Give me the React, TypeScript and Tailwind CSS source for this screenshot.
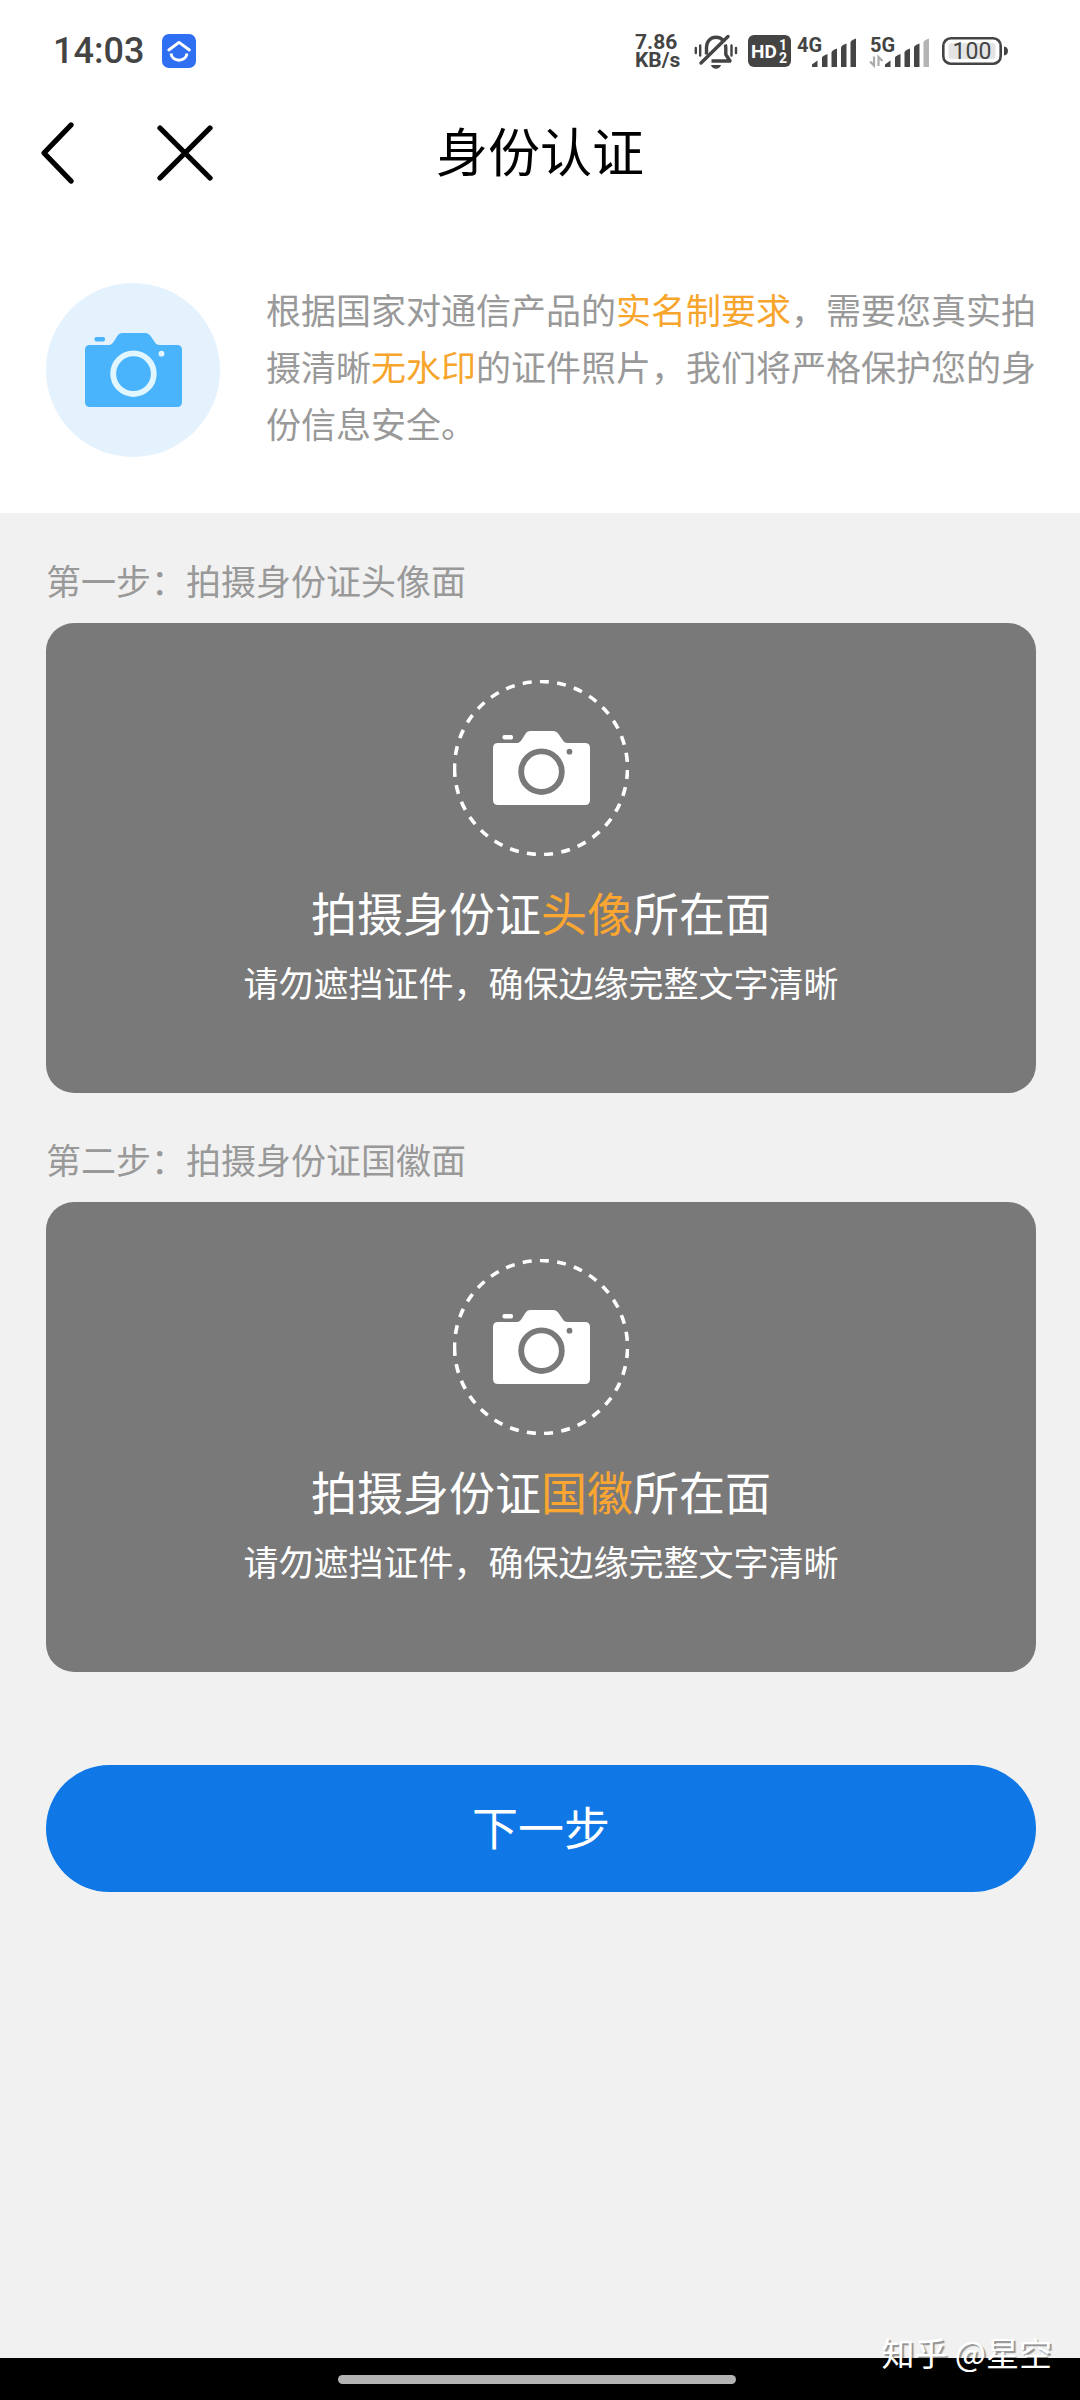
import type { ReactNode } from 'react';

function AppBadge() {
  return (
    <svg width="34" height="34" viewBox="0 0 34 34" fill="none" aria-hidden="true">
      <rect width="34" height="34" rx="7" fill="#2f6ff1" />
      <g stroke="#fff" strokeWidth="2.9">
        <path d="M6.8 16 17 8.4 27.4 16" strokeLinecap="round" strokeLinejoin="round" />
        <path d="M9 19.5C9.6 23.600 12.800 26.200 17 26.200S24.400 23.600 25 19.500" />
      </g>
    </svg>
  );
}

function MutedBell() {
  return (
    <svg width="50" height="40" viewBox="0 0 50 40" fill="none" stroke="#444" aria-hidden="true">
      <g strokeWidth="3.4" strokeLinejoin="round">
        <path d="M14.500 23.500V16.500C14.500 10.500 18.500 6.200 24 6.200c3 0 5.200 1 6.800 2.800" />
        <path d="M33.300 13.500c.4 1.200.5 2.300.5 3.500v6.500l4.200 6.500H19.500" />
        <path d="M9 32 36 5.500" strokeLinecap="round" />
      </g>
      <path d="M19 34h10c-.8 2.500-2.600 3.800-5 3.800s-4.200-1.300-5-3.800z" fill="#444" stroke="none" />
      <path d="M8.200 14.500v10M3.800 17v5M39.500 14.500v10M44 17v5" strokeWidth="2.4" strokeLinecap="round" />
    </svg>
  );
}

function HdBadge() {
  return (
    <svg width="43" height="32" viewBox="0 0 43 32" aria-hidden="true">
      <rect width="43" height="32" rx="6" fill="#444" />
      <g fill="#fff" fontFamily="Roboto, sans-serif" fontWeight="700">
        <text x="3" y="23" fontSize="19">HD</text>
        <text x="31" y="15" fontSize="14">1</text>
        <text x="31" y="28" fontSize="14">2</text>
      </g>
    </svg>
  );
}

function Signal({ label, full }: { label: string; full: boolean }) {
  return (
    <svg
      className="overflow-visible"
      width={full ? 60 : 73}
      height="34"
      viewBox={full ? '0 0 60 34' : '-7 0 73 34'}
      fill="#444"
      aria-hidden="true"
    >
      <text x="0" y="18" fontSize="20" fontWeight="700" fontFamily="Roboto, sans-serif">
        {label}
      </text>
      <path d="M15 33V30.500L20.500 26.500V33z" />
      <path d="M25 33V23.500Q25 22 30.500 20V33z" />
      <path d="M34.500 33V18.500Q34.500 16.500 40 14.500V33z" />
      <path d="M44 33V13.500Q44 11.500 49.500 9.500V33z" />
      <path d="M53.500 33V8.500Q53.500 6.500 59 4.500V33z" fill={full ? '#444' : '#b4b4b4'} />
      {!full && (
        <path d="M4 22.500v9l-4-4M8.500 32v-9l4 4" fill="none" stroke="#aaa" strokeWidth="2.2" />
      )}
    </svg>
  );
}

function Battery() {
  return (
    <svg width="66" height="28" viewBox="0 0 66 28" fill="none" aria-hidden="true">
      <rect x="1.300" y="1.300" width="57.400" height="25.400" rx="7.500" stroke="#444" strokeWidth="2.6" />
      <rect x="6.500" y="6" width="47" height="16" rx="3" fill="#e4e4e4" />
      <path d="M62 9.500c2.500.3 4 1.800 4 4.500s-1.500 4.200-4 4.500z" fill="#444" />
      <text x="30" y="22" textAnchor="middle" fontSize="23" fontFamily="Roboto, sans-serif" fill="#444">
        100
      </text>
    </svg>
  );
}

function Camera({ body, lens }: { body: string; lens: string }) {
  return (
    <svg width="97" height="74" viewBox="0 0 97 74" fill={body} aria-hidden="true">
      <rect x="9.500" y="4" width="10.500" height="4.600" rx="1.800" />
      <path d="M5 12H23.500C26.500 12 28 10 29.500 7.500L32 3.500C33.500 1 35 0 37.500 0H60C62.500 0 64 1 65.500 3L70 9.500C71.300 11.300 72.500 12 74.500 12H92Q97 12 97 17V69Q97 74 92 74H5Q0 74 0 69V17Q0 12 5 12z" />
      <circle cx="48.500" cy="40.700" r="20.300" fill="none" stroke={lens} strokeWidth="5.8" />
      <circle cx="76.500" cy="20.700" r="2.900" fill={lens} />
    </svg>
  );
}

function CaptureStep({ step, children }: { step: string; children: ReactNode }) {
  return (
    <section>
      <h2 className="text-[35px] leading-[50px] text-[#999]">{step}</h2>
      <button
        type="button"
        className="mt-[18px] flex w-full flex-col items-center rounded-[28px] bg-[#797979] pt-[57px] pb-[86px] text-white"
      >
        <span className="grid place-items-center">
          <svg className="col-start-1 row-start-1" width="176" height="176" viewBox="-88 -88 176 176" fill="none" aria-hidden="true">
            <circle r="86.500" stroke="#fff" strokeWidth="3.6" strokeDasharray="9 8.35" transform="scale(-1 1)" />
          </svg>
          <span className="col-start-1 row-start-1">
            <Camera body="#fff" lens="#797979" />
          </span>
        </span>
        <span className="mt-[22px] text-[46px] leading-[66px]">{children}</span>
        <span className="mt-[13px] text-[35px] leading-[50px]">请勿遮挡证件，确保边缘完整文字清晰</span>
      </button>
    </section>
  );
}

export default function App() {
  return (
    <div
      lang="zh-CN"
      className="flex min-h-screen flex-col bg-[#f1f1f1] font-['Noto_Sans_CJK_SC',sans-serif]"
    >
      <header className="bg-white">
        {/* Status bar */}
        <div className="flex h-[102px] items-center justify-between pr-[72px] pl-[53px] font-['Roboto',sans-serif] text-[#444]">
          <div className="flex items-center gap-[18px]">
            <span className="text-[36px] leading-10 font-medium">14:03</span>
            <AppBadge />
          </div>
          <div className="flex items-center gap-1.5">
            <span className="w-[51px] text-[21px] leading-[18px] font-bold">
              7.86
              <br />
              KB/s
            </span>
            <MutedBell />
            <HdBadge />
            <Signal label="4G" full />
            <Signal label="5G" full={false} />
            <Battery />
          </div>
        </div>

        {/* Title bar */}
        <div className="grid h-[102px] grid-cols-[1fr_auto_1fr] items-center">
          <div className="flex items-center gap-20 pl-10">
            <button type="button" aria-label="返回">
              <svg width="36" height="64" viewBox="0 0 36 64" fill="none" stroke="#000" strokeWidth="5.3" strokeLinecap="round" strokeLinejoin="round">
                <path d="M31 4 4 32 31 60" />
              </svg>
            </button>
            <button type="button" aria-label="关闭">
              <svg width="58" height="58" viewBox="0 0 58 58" fill="none" stroke="#000" strokeWidth="5.3" strokeLinecap="round">
                <path d="M4 4 54 54M54 4 4 54" />
              </svg>
            </button>
          </div>
          <h1 className="pb-1.5 text-[52px] leading-[72px] text-black">身份认证</h1>
        </div>

        {/* Notice */}
        <div className="flex items-center gap-[46px] pt-[76px] pr-10 pb-[54px] pl-[46px]">
          <div className="flex size-[174px] shrink-0 items-center justify-center rounded-full bg-[#e4f2fe]">
            <Camera body="#49b3fc" lens="#e2f6ff" />
          </div>
          <p className="pb-2 text-[35px] leading-[57px] text-[#999]">
            根据国家对通信产品的<em className="text-[#f7a52c] not-italic">实名制要求</em>，需要您真实拍摄清晰<em className="text-[#f7a52c] not-italic">无水印</em>的证件照片，我们将严格保护您的身份信息安全。
          </p>
        </div>
      </header>

      <main className="flex flex-col gap-[41px] pt-[42px] pr-11 pl-[46px]">
        <CaptureStep step="第一步：拍摄身份证头像面">
          拍摄身份证<em className="text-[#fba631] not-italic">头像</em>所在面
        </CaptureStep>
        <CaptureStep step="第二步：拍摄身份证国徽面">
          拍摄身份证<em className="text-[#fba631] not-italic">国徽</em>所在面
        </CaptureStep>
        <button
          type="button"
          className="mt-[52px] h-[127px] w-full rounded-full bg-[#0f78e6] pb-1.5 text-[46px] text-white"
        >
          下一步
        </button>
      </main>

      <footer className="relative mt-auto flex h-[42px] items-center justify-center bg-black pr-1.5">
        <div className="h-[9px] w-[37%] rounded-full bg-[#b3b3b3]" />
        <span className="absolute right-7 bottom-6 text-[33px] leading-12 text-white [text-shadow:2px_2px_1px_rgba(0,0,0,0.4)]">
          知乎 @星空
        </span>
      </footer>
    </div>
  );
}
